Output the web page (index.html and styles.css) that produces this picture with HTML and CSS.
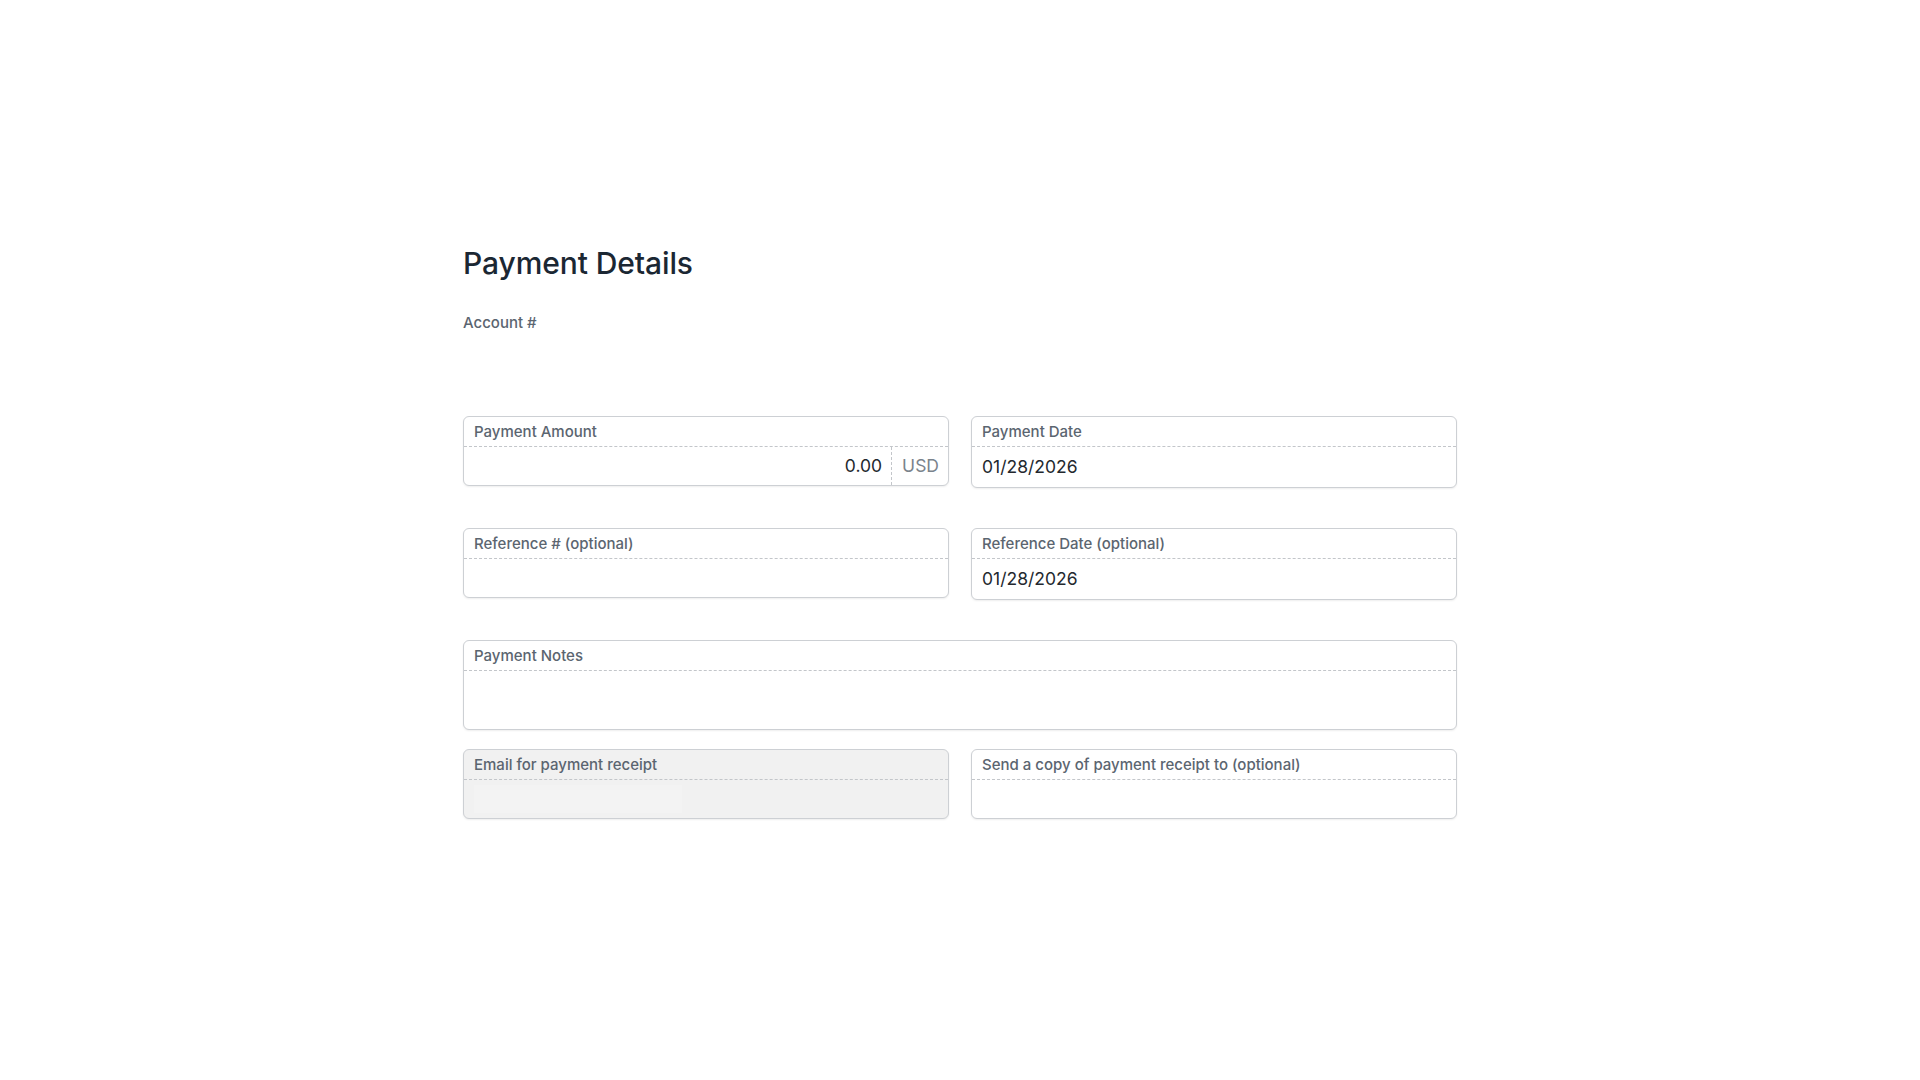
FILE: index.html
```html
<!DOCTYPE html>
<html lang="en">
<head>
<meta charset="utf-8">
<title>Payment Details</title>
<link rel="stylesheet" href="styles.css">
</head>
<body>
<main class="page">
  <h1 class="title">Payment Details</h1>
  <div class="account">
    <span class="account-label">Account #</span>
    <div class="account-value"></div>
  </div>

  <div class="form">
    <div class="row">
      <div class="field">
        <div class="field-label">Payment Amount</div>
        <div class="field-input amount">
          <span class="amount-value">0.00</span>
          <span class="currency">USD</span>
        </div>
      </div>
      <div class="field tall">
        <div class="field-label">Payment Date</div>
        <div class="field-input">01/28/2026</div>
      </div>
    </div>

    <div class="row">
      <div class="field">
        <div class="field-label">Reference # (optional)</div>
        <div class="field-input"></div>
      </div>
      <div class="field tall">
        <div class="field-label">Reference Date (optional)</div>
        <div class="field-input">01/28/2026</div>
      </div>
    </div>

    <div class="row single">
      <div class="field notes">
        <div class="field-label">Payment Notes</div>
        <div class="field-input"></div>
      </div>
    </div>

    <div class="row close">
      <div class="field disabled">
        <div class="field-label">Email for payment receipt</div>
        <div class="field-input ghost-wrap"><span class="ghost"></span></div>
      </div>
      <div class="field">
        <div class="field-label">Send a copy of payment receipt to (optional)</div>
        <div class="field-input"></div>
      </div>
    </div>
  </div>
</main>
</body>
</html>
```

FILE: styles.css
```css
* {
  box-sizing: border-box;
}

html, body {
  margin: 0;
  padding: 0;
  background: #ffffff;
}

body {
  font-family: Inter, "Noto Sans", "Liberation Sans", sans-serif;
  color: #222831;
}

.page {
  width: 994px;
  margin: 0 auto;
  padding-top: 244px;
}

.title {
  margin: 0;
  font-size: 30px;
  line-height: 38px;
  font-weight: 500;
  color: #1b2733;
  letter-spacing: -0.1px;
}

.account {
  margin-top: 31px;
  height: 103px;
}

.account-label {
  display: block;
  font-size: 15px;
  line-height: 20px;
  font-weight: 500;
  color: #5b6570;
}

.form {
  display: flex;
  flex-direction: column;
}

.row {
  display: grid;
  grid-template-columns: 1fr 1fr;
  column-gap: 22px;
  align-items: start;
  margin-bottom: 40px;
}

.row.single {
  grid-template-columns: 1fr;
  margin-bottom: 19px;
}

.field {
  border: 1px solid #cdd0d4;
  border-radius: 6px;
  background: #ffffff;
  box-shadow: 0 1px 2px rgba(0, 0, 0, 0.07);
  overflow: hidden;
}

.field-label {
  height: 30px;
  padding: 0 10px;
  font-size: 15px;
  line-height: 30px;
  font-weight: 500;
  color: #5b6570;
  border-bottom: 1px dashed #c3c6ca;
}

.field-input {
  height: 38px;
  padding: 0 10px;
  font-size: 17.5px;
  line-height: 38px;
  color: #23282e;
}

.field.tall .field-input {
  height: 40px;
  line-height: 40px;
}

.field.notes .field-input {
  height: 58px;
}

.field-input.amount {
  display: flex;
  justify-content: flex-end;
  padding: 0 9px 0 0;
}

.amount-value {
  padding-right: 9px;
}

.currency {
  padding-left: 10px;
  border-left: 1px dashed #c3c6ca;
  color: #7b838c;
}

.field.disabled {
  background: #f1f1f1;
}

.ghost-wrap {
  padding-top: 5px;
}

.ghost {
  display: block;
  width: 208px;
  height: 28px;
  background: #f3f3f3;
}
```
